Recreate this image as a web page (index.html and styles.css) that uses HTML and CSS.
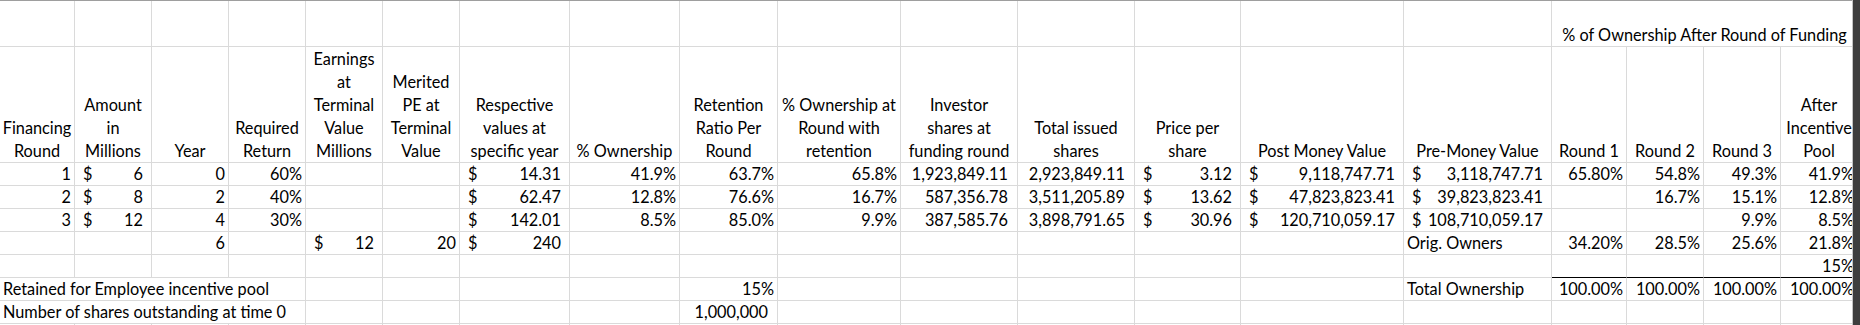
FILE: index.html
```html
<!DOCTYPE html>
<html lang="en">
<head>
<meta charset="utf-8">
<title>Financing Rounds</title>
<link rel="stylesheet" href="styles.css">
</head>
<body>
<div class="viewport">
  <div class="sheet">
    <!-- row 1 -->
    <div class="c"></div><div class="c"></div><div class="c"></div><div class="c"></div><div class="c"></div>
    <div class="c"></div><div class="c"></div><div class="c"></div><div class="c"></div><div class="c"></div>
    <div class="c"></div><div class="c"></div><div class="c"></div><div class="c"></div><div class="c"></div>
    <div class="c ctr span4">% of Ownership After Round of Funding</div>

    <!-- row 2: headers -->
    <div class="c hd">Financing<br>Round</div>
    <div class="c hd">Amount<br>in<br>Millions</div>
    <div class="c hd">Year</div>
    <div class="c hd">Required<br>Return</div>
    <div class="c hd">Earnings<br>at<br>Terminal<br>Value<br>Millions</div>
    <div class="c hd">Merited<br>PE at<br>Terminal<br>Value</div>
    <div class="c hd">Respective<br>values at<br>specific year</div>
    <div class="c hd">% Ownership</div>
    <div class="c hd">Retention<br>Ratio Per<br>Round</div>
    <div class="c hd">% Ownership at<br>Round with<br>retention</div>
    <div class="c hd">Investor<br>shares at<br>funding round</div>
    <div class="c hd">Total issued<br>shares</div>
    <div class="c hd">Price per<br>share</div>
    <div class="c hd">Post Money Value</div>
    <div class="c hd">Pre-Money Value</div>
    <div class="c hd">Round 1</div>
    <div class="c hd">Round 2</div>
    <div class="c hd">Round 3</div>
    <div class="c hd">After<br>Incentive<br>Pool</div>

    <!-- row 3 -->
    <div class="c r">1</div>
    <div class="c acc"><span>$</span><span>6</span></div>
    <div class="c r">0</div>
    <div class="c r">60%</div>
    <div class="c"></div>
    <div class="c"></div>
    <div class="c acc"><span>$</span><span>14.31</span></div>
    <div class="c r">41.9%</div>
    <div class="c r">63.7%</div>
    <div class="c r">65.8%</div>
    <div class="c r pad">1,923,849.11</div>
    <div class="c r pad">2,923,849.11</div>
    <div class="c acc"><span>$</span><span>3.12</span></div>
    <div class="c acc"><span>$</span><span>9,118,747.71</span></div>
    <div class="c acc"><span>$</span><span>3,118,747.71</span></div>
    <div class="c r">65.80%</div>
    <div class="c r">54.8%</div>
    <div class="c r">49.3%</div>
    <div class="c r">41.9%</div>

    <!-- row 4 -->
    <div class="c r">2</div>
    <div class="c acc"><span>$</span><span>8</span></div>
    <div class="c r">2</div>
    <div class="c r">40%</div>
    <div class="c"></div>
    <div class="c"></div>
    <div class="c acc"><span>$</span><span>62.47</span></div>
    <div class="c r">12.8%</div>
    <div class="c r">76.6%</div>
    <div class="c r">16.7%</div>
    <div class="c r pad">587,356.78</div>
    <div class="c r pad">3,511,205.89</div>
    <div class="c acc"><span>$</span><span>13.62</span></div>
    <div class="c acc"><span>$</span><span>47,823,823.41</span></div>
    <div class="c acc"><span>$</span><span>39,823,823.41</span></div>
    <div class="c"></div>
    <div class="c r">16.7%</div>
    <div class="c r">15.1%</div>
    <div class="c r">12.8%</div>

    <!-- row 5 -->
    <div class="c r">3</div>
    <div class="c acc"><span>$</span><span>12</span></div>
    <div class="c r">4</div>
    <div class="c r">30%</div>
    <div class="c"></div>
    <div class="c"></div>
    <div class="c acc"><span>$</span><span>142.01</span></div>
    <div class="c r">8.5%</div>
    <div class="c r">85.0%</div>
    <div class="c r">9.9%</div>
    <div class="c r pad">387,585.76</div>
    <div class="c r pad">3,898,791.65</div>
    <div class="c acc"><span>$</span><span>30.96</span></div>
    <div class="c acc"><span>$</span><span>120,710,059.17</span></div>
    <div class="c acc"><span>$</span><span>108,710,059.17</span></div>
    <div class="c"></div>
    <div class="c"></div>
    <div class="c r">9.9%</div>
    <div class="c r">8.5%</div>

    <!-- row 6 -->
    <div class="c"></div>
    <div class="c"></div>
    <div class="c r">6</div>
    <div class="c"></div>
    <div class="c acc"><span>$</span><span>12</span></div>
    <div class="c r">20</div>
    <div class="c acc"><span>$</span><span>240</span></div>
    <div class="c"></div>
    <div class="c"></div>
    <div class="c"></div>
    <div class="c"></div>
    <div class="c"></div>
    <div class="c"></div>
    <div class="c"></div>
    <div class="c">Orig. Owners</div>
    <div class="c r">34.20%</div>
    <div class="c r">28.5%</div>
    <div class="c r">25.6%</div>
    <div class="c r">21.8%</div>

    <!-- row 7 -->
    <div class="c"></div><div class="c"></div><div class="c"></div><div class="c"></div><div class="c"></div>
    <div class="c"></div><div class="c"></div><div class="c"></div><div class="c"></div><div class="c"></div>
    <div class="c"></div><div class="c"></div><div class="c"></div><div class="c"></div><div class="c"></div>
    <div class="c ul"></div>
    <div class="c ul"></div>
    <div class="c ul"></div>
    <div class="c r ul">15%</div>

    <!-- row 8 -->
    <div class="c span4">Retained for Employee incentive pool</div>
    <div class="c"></div>
    <div class="c"></div>
    <div class="c"></div>
    <div class="c"></div>
    <div class="c r">15%</div>
    <div class="c"></div>
    <div class="c"></div>
    <div class="c"></div>
    <div class="c"></div>
    <div class="c"></div>
    <div class="c">Total Ownership</div>
    <div class="c r">100.00%</div>
    <div class="c r">100.00%</div>
    <div class="c r">100.00%</div>
    <div class="c r">100.00%</div>

    <!-- row 9 -->
    <div class="c span4">Number of shares outstanding at time 0</div>
    <div class="c"></div>
    <div class="c"></div>
    <div class="c"></div>
    <div class="c"></div>
    <div class="c r pad">1,000,000</div>
    <div class="c"></div><div class="c"></div><div class="c"></div><div class="c"></div><div class="c"></div>
    <div class="c"></div><div class="c"></div><div class="c"></div><div class="c"></div><div class="c"></div>

    <!-- row 10 -->
    <div class="c"></div><div class="c"></div><div class="c"></div><div class="c"></div><div class="c"></div>
    <div class="c"></div><div class="c"></div><div class="c"></div><div class="c"></div><div class="c"></div>
    <div class="c"></div><div class="c"></div><div class="c"></div><div class="c"></div><div class="c"></div>
    <div class="c"></div><div class="c"></div><div class="c"></div><div class="c"></div>
  </div>
  <div class="edge"></div>
</div>
</body>
</html>
```

FILE: styles.css
```css
html, body {
  margin: 0;
  padding: 0;
  background: #ffffff;
}

body {
  font-family: "Lato", "Open Sans", sans-serif;
  font-size: 16.3px;
  color: #000000;
}

.viewport {
  position: relative;
  width: 1860px;
  height: 325px;
  overflow: hidden;
}

.sheet {
  display: grid;
  grid-template-columns: 75px 77px 77px 77px 77px 77px 110px 110px 98px 123px 117px 117px 106px 163px 148px 75px 77px 77px 77px;
  grid-template-rows: 46px 116px repeat(8, 23px);
  border-top: 1px solid #9e9e9e;
  width: 1858px;
}

.c {
  box-sizing: border-box;
  border-right: 1px solid #dadada;
  border-bottom: 1px solid #dadada;
  padding: 0 3px;
  display: flex;
  align-items: flex-end;
  justify-content: flex-start;
  line-height: 22px;
  white-space: nowrap;
  min-width: 0;
}

.r {
  justify-content: flex-end;
}

.ctr {
  justify-content: center;
}

.pad {
  padding-right: 9px;
}

.acc {
  justify-content: space-between;
  padding: 0 8px;
}

.hd {
  justify-content: center;
  text-align: center;
  line-height: 23px;
}

.span4 {
  grid-column: span 4;
}

.ul {
  border-bottom-color: #000000;
}

.edge {
  position: absolute;
  top: 0;
  right: 0;
  bottom: 0;
  width: 7px;
  background: #3e3e3e;
  border-left: 1px solid #c4c4c4;
}
```
